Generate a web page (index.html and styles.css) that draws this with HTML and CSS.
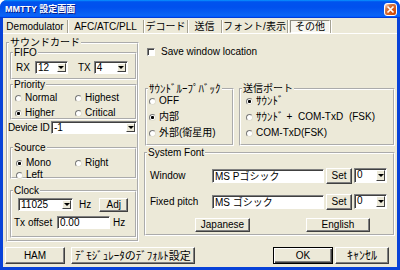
FILE: index.html
```html
<!DOCTYPE html>
<html lang="ja">

<head>
    <meta charset="UTF-8">
    <title>MMTTY 設定画面</title>
    <link rel="stylesheet" href="styles.css">
</head>

<body>
    <div class="window">
        <div class="titlebar">
            <span class="title">MMTTY 設定画面</span>
            <span class="close">
                <svg width="9" height="9" viewBox="0 0 9 9"><path d="M1.5 1.5l6 6M7.5 1.5l-6 6" stroke="#fff" stroke-width="1.7"/></svg>
            </span>
        </div>

        <div class="client">
            <div class="tabs">
                <div class="tab t-demod">Demodulator</div>
                <div class="tab t-afc">AFC/ATC/PLL</div>
                <div class="tab t-dec">デコード</div>
                <div class="tab t-tx">送信</div>
                <div class="tab t-font">フォント/表示</div>
                <div class="tab sel">その他</div>
            </div>

            <div class="page">
                <!-- サウンドカード -->
                <fieldset class="group sound">
                    <legend>サウンドカード</legend>

                    <fieldset class="group fifo">
                        <legend>FIFO</legend>
                        <div class="row fifo-row">
                            <span>RX</span>
                            <div class="combo w-rx"><span>12</span><b></b></div>
                            <span class="tx-label">TX</span>
                            <div class="combo w-tx"><span>4</span><b></b></div>
                        </div>
                    </fieldset>

                    <fieldset class="group priority">
                        <legend>Priority</legend>
                        <div class="radios two-col">
                            <label class="radio"><span class="dot"></span>Normal</label>
                            <label class="radio"><span class="dot"></span>Highest</label>
                            <label class="radio"><span class="dot on"></span>Higher</label>
                            <label class="radio"><span class="dot"></span>Critical</label>
                        </div>
                    </fieldset>

                    <div class="row device">
                        <span class="device-label">Device ID</span>
                        <div class="combo w-dev"><span>-1</span><b></b></div>
                    </div>

                    <fieldset class="group source">
                        <legend>Source</legend>
                        <div class="radios two-col">
                            <label class="radio"><span class="dot on"></span>Mono</label>
                            <label class="radio"><span class="dot"></span>Right</label>
                            <label class="radio"><span class="dot"></span>Left</label>
                        </div>
                    </fieldset>

                    <fieldset class="group clock">
                        <legend>Clock</legend>
                        <div class="row clock-row">
                            <div class="combo w-clock"><span>11025</span><b></b></div>
                            <span class="hz">Hz</span>
                            <div class="btn adj">Adj</div>
                        </div>
                        <div class="row offset-row">
                            <span class="offset-label">Tx offset</span>
                            <div class="edit w-offset">0.00</div>
                            <span class="hz2">Hz</span>
                        </div>
                    </fieldset>
                </fieldset>

                <div class="right">
                    <label class="checkbox"><span class="box"></span>Save window location</label>

                    <div class="pair">
                        <fieldset class="group loop">
                            <legend class="hk">ｻｳﾝﾄﾞﾙｰﾌﾟﾊﾞｯｸ</legend>
                            <div class="radios stack">
                                <label class="radio"><span class="dot"></span>OFF</label>
                                <label class="radio"><span class="dot on"></span>内部</label>
                                <label class="radio"><span class="dot"></span>外部(衛星用)</label>
                            </div>
                        </fieldset>

                        <fieldset class="group port">
                            <legend>送信ポート</legend>
                            <div class="radios stack">
                                <label class="radio"><span class="dot on"></span><span class="hk">ｻｳﾝﾄﾞ</span></label>
                                <label class="radio wide"><span class="dot"></span><span class="hk">ｻｳﾝﾄﾞ</span> + COM-TxD (FSK)</label>
                                <label class="radio"><span class="dot"></span>COM-TxD(FSK)</label>
                            </div>
                        </fieldset>
                    </div>

                    <fieldset class="group sysfont">
                        <legend>System Font</legend>
                        <div class="font-row">
                            <span class="font-label">Window</span>
                            <div class="edit w-font">MS Pゴシック</div>
                            <div class="btn set">Set</div>
                            <div class="combo w-size"><span>0</span><b></b></div>
                        </div>
                        <div class="font-row">
                            <span class="font-label">Fixed pitch</span>
                            <div class="edit w-font">MS ゴシック</div>
                            <div class="btn set">Set</div>
                            <div class="combo w-size"><span>0</span><b></b></div>
                        </div>
                        <div class="lang-row">
                            <div class="btn jp">Japanese</div>
                            <div class="btn en">English</div>
                        </div>
                    </fieldset>
                </div>
            </div>

            <div class="footer">
                <div class="btn ham">HAM</div>
                <div class="btn demod hk">ﾃﾞﾓｼﾞｭﾚｰﾀのﾃﾞﾌｫﾙﾄ設定</div>
                <div class="btn ok default">OK</div>
                <div class="btn cancel hk">ｷｬﾝｾﾙ</div>
            </div>
        </div>
    </div>
</body>

</html>
```

FILE: styles.css
```css
* {
    box-sizing: border-box;
}

body {
    margin: 0;
    background: #fff;
    font-family: "Liberation Sans", "Noto Sans CJK JP", sans-serif;
    font-size: 10px;
    line-height: 12px;
    color: #000;
}

/* half-width katakana runs */
.hk {
    font-size: 11px;
}

.window {
    width: 400px;
    height: 270px;
    display: flex;
    flex-direction: column;
    background: #0842d8;
    border-radius: 7px 7px 0 0;
    overflow: hidden;
}

.titlebar {
    height: 18px;
    flex: none;
    display: flex;
    align-items: center;
    padding: 0 3px 0 5px;
    background: linear-gradient(180deg, #0997ff, #0053ee 10%, #0050ee 40%, #0a63f4 85%, #005bff 92%, #003dd7 96%, #003dd7);
}

.title {
    flex: 1;
    color: #fff;
    font-size: 9px;
    font-weight: bold;
    text-shadow: 1px 1px #0a1e8c;
}

.close {
    width: 13px;
    height: 13px;
    border: 1px solid #fff;
    border-radius: 3px;
    display: flex;
    align-items: center;
    justify-content: center;
    background: radial-gradient(circle at 90% 90%, #cc4600 0, #dc6527 55%, #cd7546 70%, #ffccb2 90%, #fff 100%);
}

.client {
    flex: 1;
    margin: 0 3px 3px;
    background: #ece9d8;
    display: flex;
    flex-direction: column;
}

/* tabs */
.tabs {
    height: 16px;
    flex: none;
    display: flex;
    padding-top: 2px;
    border-bottom: 1px solid #fff;
}

.tab {
    text-align: center;
    line-height: 13px;
    border-right: 1px solid #a5a293;
    box-shadow: 1px 0 #fff;
}

.t-demod { width: 65px; }
.t-afc { width: 76px; }
.t-dec { width: 44px; }
.t-tx { width: 34px; }
.t-font { width: 66px; }

.tab.sel {
    width: 40px;
    margin-left: 2px;
    border: 1px solid;
    border-color: #8e8c80 #fff #fff #8e8c80;
    background: #f6f5ef;
    line-height: 11px;
    box-shadow: 1px 0 #a5a293, 2px 0 #fff;
}

/* page */
.page {
    display: flex;
    gap: 5px;
    padding: 4px 2px 0 3px;
}

.group {
    margin: 0;
    padding: 0;
    min-width: 0;
    border: 2px groove #fff;
}

.group legend {
    margin-left: 1px;
    padding: 0 1px;
    line-height: 10px;
}

.row {
    display: flex;
    align-items: center;
}

.sound {
    width: 133px;
    padding-bottom: 2px;
}

.fifo {
    height: 32px;
    margin-left: 2px;
}

.fifo-row {
    margin-top: 3px;
    padding-left: 4px;
    height: 13px;
}

.w-rx {
    width: 33px;
    margin-left: 5px;
}

.tx-label {
    margin-left: 10px;
}

.w-tx {
    width: 34px;
    margin-left: 3px;
}

.priority {
    height: 40px;
    margin-left: 2px;
}

.radios.two-col {
    display: grid;
    grid-template-columns: 60px auto;
    row-gap: 3px;
    padding: 2px 0 0 3px;
}

.source .radios.two-col {
    grid-template-columns: 59px auto;
    row-gap: 0;
    padding: 4px 0 0 4px;
}

.radio {
    display: flex;
    align-items: center;
    gap: 3px;
    height: 12px;
    white-space: nowrap;
}

.radio.wide {
    word-spacing: 3px;
}

.dot {
    width: 7px;
    height: 7px;
    flex: none;
    border-radius: 50%;
    border: 1px solid;
    border-color: #7a7a7a #e2dfd0 #e2dfd0 #7a7a7a;
    background: #fff;
}

.dot.on {
    background: radial-gradient(circle, #000 1.3px, #fff 1.8px);
}

.device {
    margin-top: 1px;
    height: 13px;
}

.device-label {
    flex: none;
    width: 43px;
    letter-spacing: -0.2px;
    white-space: nowrap;
}

.w-dev {
    width: 86px;
}

.source {
    height: 36px;
    margin: 9px 0 0 2px;
}

.clock {
    height: 52px;
    margin: 7px 0 0 2px;
}

.clock-row {
    margin-top: 1px;
    height: 15px;
    padding-left: 6px;
}

.w-clock {
    width: 55px;
}

.hz {
    margin-left: 6px;
}

.adj {
    width: 29px;
    height: 14px;
    margin-left: 8px;
}

.offset-row {
    margin-top: 4px;
    height: 13px;
    padding-left: 2px;
}

.offset-label {
    width: 43px;
    white-space: nowrap;
}

.w-offset {
    width: 53px;
}

.hz2 {
    margin-left: 3px;
}

/* inputs */
.combo,
.edit {
    height: 13px;
    background: #fff;
    border: 1px solid;
    border-color: #808080 #fff #fff #808080;
    box-shadow: inset 1px 1px #404040;
    line-height: 10px;
    white-space: nowrap;
}

.combo {
    display: flex;
    padding: 1px;
}

.combo span {
    flex: 1;
    padding-left: 1px;
}

.edit {
    padding: 1px 0 0 2px;
}

.combo b {
    width: 9px;
    display: flex;
    align-items: center;
    justify-content: center;
    background: #ece9d8;
    border: 1px solid;
    border-color: #fff #404040 #404040 #fff;
}

.combo b::after {
    content: "";
    border-top: 3px solid #000;
    border-left: 3px solid transparent;
    border-right: 3px solid transparent;
}

.btn {
    display: flex;
    align-items: center;
    justify-content: center;
    background: #ece9d8;
    border: 1px solid;
    border-color: #fff #404040 #404040 #fff;
    box-shadow: inset -1px -1px #808080;
    white-space: nowrap;
}

.btn.default {
    border-color: #000;
    box-shadow: inset 1px 1px #fff, inset -1px -1px #404040, inset -2px -2px #808080;
}

/* right column */
.right {
    width: 251px;
    display: flex;
    flex-direction: column;
}

.checkbox {
    display: flex;
    align-items: center;
    gap: 6px;
    height: 12px;
    margin: 8px 0 0 3px;
}

.box {
    width: 8px;
    height: 8px;
    background: #fff;
    border: 1px solid;
    border-color: #808080 #fff #fff #808080;
    box-shadow: inset 1px 1px #404040;
}

.pair {
    display: flex;
    gap: 5px;
    height: 62px;
    margin-top: 26px;
}

.loop {
    width: 89px;
    margin-left: 1px;
}

.port {
    flex: 1;
}

.radios.stack {
    display: flex;
    flex-direction: column;
    gap: 4px;
    padding-top: 1px;
}

.loop .radios.stack {
    padding-left: 2px;
}

.port .radios.stack {
    padding-left: 5px;
}

.sysfont {
    height: 88px;
    margin-top: 2px;
}

.font-row {
    display: flex;
    align-items: center;
    gap: 2px;
    height: 17px;
    margin-top: 9px;
    padding-left: 4px;
}

.font-label {
    width: 60px;
}

.w-font {
    width: 112px;
    height: 14px;
    padding-top: 2px;
}

.set {
    width: 26px;
    height: 16px;
}

.w-size {
    width: 33px;
    height: 15px;
}

.lang-row {
    display: flex;
    margin: 8px 0 0 49px;
}

.jp {
    width: 55px;
    height: 14px;
}

.en {
    width: 64px;
    height: 14px;
    margin-left: 56px;
}

/* footer */
.footer {
    display: flex;
    padding: 5px 8px 0 2px;
}

.footer .btn {
    height: 17px;
}

.ham {
    width: 60px;
}

.demod {
    width: 124px;
    margin-left: 6px;
}

.ok {
    width: 60px;
    margin-left: auto;
}

.cancel {
    width: 54px;
    margin-left: 2px;
    font-size: 12px;
}
```
